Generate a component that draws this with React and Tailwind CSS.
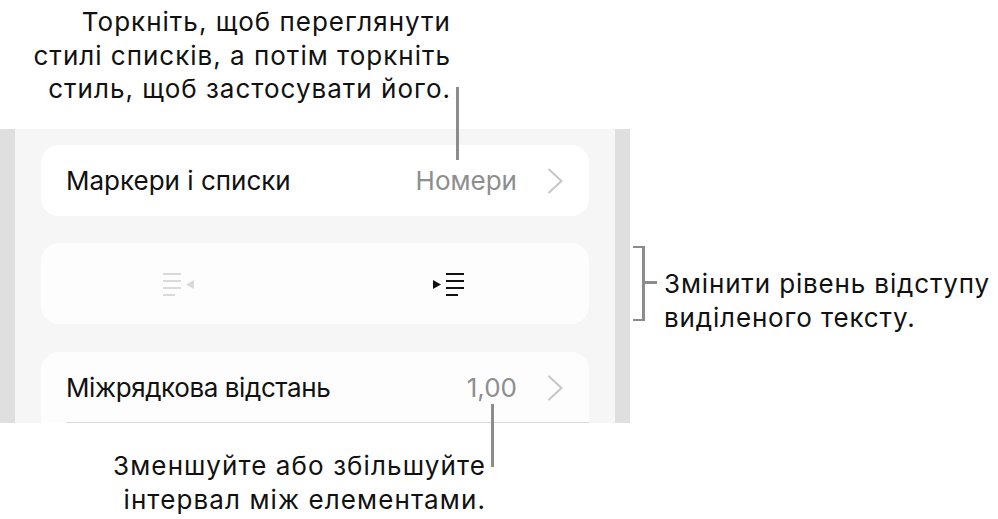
const font = { fontFamily: 'Inter, "Noto Sans", sans-serif' };

const Chevron = () => (
  <svg width="16" height="26" viewBox="0 0 16 26" className="ml-[30px] shrink-0" fill="none">
    <path d="M1.500 1 L14.500 13 L1.500 25" stroke="#c6c6c8" strokeWidth="2" />
  </svg>
);

const OutdentIcon = () => (
  <svg width="32" height="24" viewBox="0 0 32 24" fill="none">
    <g stroke="#dadada" strokeWidth="2">
      <path d="M0 2h18M0 9h18M0 16h18M0 23h12" />
    </g>
    <path d="M23 12.500 L31 8 V17 Z" fill="#dadada" />
  </svg>
);

const IndentIcon = () => (
  <svg width="32" height="24" viewBox="0 0 32 24" fill="none">
    <g stroke="#111" strokeWidth="2">
      <path d="M13 2h18M13 9h18M13 16h18M13 23h12" />
    </g>
    <path d="M8 12.500 L0 8 V17 Z" fill="#111" />
  </svg>
);

const Row = ({ label, value, labelClass = '' }) => (
  <div className="flex items-center h-[71px] pl-[25px] pr-[26px]">
    <span className={`text-[#111] flex-1 ${labelClass}`}>{label}</span>
    <span className="text-[#8e8e90]">{value}</span>
    <Chevron />
  </div>
);

export default function App() {
  return (
    <div className="relative w-[998px] h-[519px] bg-white overflow-hidden text-[26px]" style={font}>
      <div className="h-[129px] w-[451px] pt-[5px] leading-[33.500px] text-[#111] whitespace-nowrap text-right tracking-[1px]">
        <div>Торкніть, щоб переглянути</div>
        <div>стилі списків, а потім торкніть</div>
        <div>стиль, щоб застосувати його.</div>
      </div>

      <div className="flex h-[294px]">
        <div className="w-[630px] bg-[#dfdfdf] px-[15px] shrink-0">
          <div className="h-full bg-[#f6f6f6] pt-[16px] px-[26px] overflow-hidden">
            <div className="bg-white rounded-[18px]">
              <Row label="Маркери і списки" value="Номери" />
            </div>
            <div className="bg-[#fdfdfd] rounded-[18px] h-[81px] mt-[27px] grid grid-cols-2 items-center">
              <div className="flex justify-center pl-[1px]"><OutdentIcon /></div>
              <div className="flex justify-center pr-[6px]"><IndentIcon /></div>
            </div>
            <div className="bg-[#fdfdfd] rounded-t-[18px] mt-[28px] h-[71px] relative">
              <Row label="Міжрядкова відстань" value="1,00" labelClass="tracking-[-0.400px]" />
              <div className="absolute left-[25px] right-0 bottom-0 h-[1px] bg-[#d9d9d9]" />
            </div>
          </div>
        </div>

        <div className="flex-1 pl-[34px] pt-[138px] leading-[33.500px] text-[#111] whitespace-nowrap tracking-[0.850px]">
          <div>Змінити рівень відступу</div>
          <div>виділеного тексту.</div>
        </div>
      </div>

      <div className="pt-[26px] w-[486px] leading-[33.500px] text-[#111] whitespace-nowrap text-right tracking-[1.100px]">
        <div>Зменшуйте або збільшуйте</div>
        <div>інтервал між елементами.</div>
      </div>

      {/* callout leader lines */}
      <div className="absolute left-[456px] top-[87px] w-[3px] h-[73px] bg-[#8c8c8c]" />
      <div className="absolute left-[491px] top-[404px] w-[3px] h-[63px] bg-[#8c8c8c]" />
      <div className="absolute left-[633px] top-[246px] w-[12px] h-[75px] border-y-2 border-r-[3px] border-[#8c8c8c]" />
      <div className="absolute left-[645px] top-[281px] w-[12px] h-[3px] bg-[#8c8c8c]" />
    </div>
  );
}
